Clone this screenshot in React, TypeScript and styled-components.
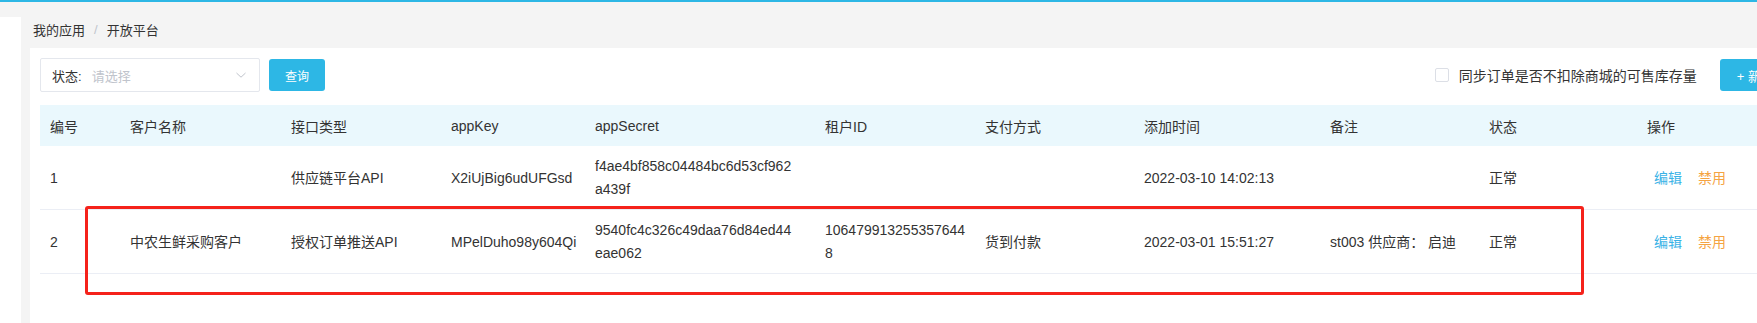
import { FC } from 'react';
import styled, { createGlobalStyle } from 'styled-components';

const GlobalStyle = createGlobalStyle`
	* {
		box-sizing: border-box;
	}
	html, body {
		margin: 0;
		padding: 0;
		overflow: hidden;
	}
	body {
		font-family: 'Liberation Sans', 'Noto Sans CJK SC', sans-serif;
		color: #333;
		background: #f4f4f4;
	}
`;

const colors = {
	primary: '#2db7e5',
	text: '#333333',
	placeholder: '#c0c4cc',
	border: '#e4e7ed',
	line: '#ebeef5',
	headerBg: '#eaf8fd',
	edit: '#3ab2e6',
	disable: '#f5a443',
	annotate: '#f5221b',
};

interface IColumn {
	key: string;
	title: string;
	width?: number;
	wrap?: number;
}

interface IRow {
	id: string;
	name: string;
	type: string;
	appKey: string;
	secret: string;
	tenant: string;
	pay: string;
	time: string;
	remark: string;
	status: string;
}

const columns: IColumn[] = [
	{ key: 'id', title: '编号', width: 80 },
	{ key: 'name', title: '客户名称', width: 161 },
	{ key: 'type', title: '接口类型', width: 160 },
	{ key: 'appKey', title: 'appKey', width: 144 },
	{ key: 'secret', title: 'appSecret', width: 230, wrap: 200 },
	{ key: 'tenant', title: '租户ID', width: 160, wrap: 144 },
	{ key: 'pay', title: '支付方式', width: 159 },
	{ key: 'time', title: '添加时间', width: 186 },
	{ key: 'remark', title: '备注', width: 159 },
	{ key: 'status', title: '状态', width: 158 },
	{ key: 'op', title: '操作' },
];

const rows: IRow[] = [
	{
		id: '1',
		name: '',
		type: '供应链平台API',
		appKey: 'X2iUjBig6udUFGsd',
		secret: 'f4ae4bf858c04484bc6d53cf962a439f',
		tenant: '',
		pay: '',
		time: '2022-03-10 14:02:13',
		remark: '',
		status: '正常',
	},
	{
		id: '2',
		name: '中农生鲜采购客户',
		type: '授权订单推送API',
		appKey: 'MPelDuho98y604Qi',
		secret: '9540fc4c326c49daa76d84ed44eae062',
		tenant: '1064799132553576448',
		pay: '货到付款',
		time: '2022-03-01 15:51:27',
		remark: 'st003 供应商： 启迪',
		status: '正常',
	},
];

const Page = styled.div`
	position: relative;
	display: flex;
	flex-direction: column;
	width: 100vw;
	height: 100vh;
	overflow: hidden;
	border-top: 2px solid ${colors.primary};
`;

const Body = styled.div`
	display: flex;
	flex: 1;
	min-height: 0;
`;

const Sidebar = styled.aside`
	flex: 0 0 21px;
	margin-top: 15px;
	background: #fff;
`;

const Main = styled.main`
	display: flex;
	flex-direction: column;
	flex: 1;
	min-width: 0;
	padding-left: 9px;
`;

const Breadcrumb = styled.nav`
	display: flex;
	align-items: center;
	height: 46px;
	padding: 8px 0 0 3px;
	font-size: 13px;
	color: ${colors.text};
`;

const Separator = styled.span`
	margin: 0 9px;
	color: ${colors.placeholder};
`;

const Panel = styled.section`
	flex: 1;
	width: 1771px;
	padding: 0 10px;
	background: #fff;
`;

const FilterRow = styled.div`
	display: flex;
	align-items: center;
	justify-content: space-between;
	height: 57px;
	padding-bottom: 3px;
`;

const Group = styled.div`
	display: flex;
	align-items: center;
`;

const Select = styled.div`
	display: flex;
	align-items: center;
	width: 220px;
	height: 34px;
	padding: 0 12px 0 11px;
	border: 1px solid ${colors.border};
	border-radius: 2px;
	font-size: 13px;
`;

const SelectLabel = styled.span`
	margin-right: 10px;
	color: ${colors.text};
`;

const Placeholder = styled.span`
	flex: 1;
	color: ${colors.placeholder};
`;

const Button = styled.button<{ $wide?: boolean }>`
	height: 32px;
	padding: ${({ $wide }) => ($wide ? '0 17px' : '0 16px')};
	margin-left: ${({ $wide }) => ($wide ? '23px' : '9px')};
	border: none;
	border-radius: 3px;
	background: ${colors.primary};
	color: #fff;
	font-family: inherit;
	font-size: ${({ $wide }) => ($wide ? '13px' : '12px')};
	white-space: nowrap;
`;

const Checkbox = styled.span`
	display: inline-block;
	width: 14px;
	height: 14px;
	margin-right: 10px;
	border: 1px solid #dcdfe6;
	border-radius: 2px;
	background: #fff;
`;

const CheckLabel = styled.span`
	font-size: 14px;
	color: ${colors.text};
`;

const Table = styled.table`
	width: 100%;
	border-collapse: collapse;
	table-layout: fixed;
	font-size: 14px;
	color: ${colors.text};
`;

const HeadCell = styled.th`
	height: 41px;
	padding: 0 0 0 10px;
	background: ${colors.headerBg};
	font-weight: normal;
	text-align: left;
`;

const Cell = styled.td`
	padding: 9px 0 8px 10px;
	line-height: 23px;
	border-bottom: 1px solid ${colors.line};
	vertical-align: middle;
	text-align: left;
`;

const Wrap = styled.div<{ $max?: number }>`
	max-width: ${({ $max }) => ($max ? `${$max}px` : 'none')};
	word-break: break-all;
`;

const Action = styled.a<{ $danger?: boolean }>`
	margin-left: ${({ $danger }) => ($danger ? '16px' : '7px')};
	color: ${({ $danger }) => ($danger ? colors.disable : colors.edit)};
	cursor: pointer;
`;

const Annotation = styled.div`
	position: absolute;
	left: 85px;
	top: 204px;
	width: 1499px;
	height: 89px;
	border: 3px solid ${colors.annotate};
	border-radius: 3px;
	pointer-events: none;
`;

const Chevron: FC = () => (
	<svg width="12" height="12" viewBox="0 0 12 12">
		<path d="M1.5 4 L6 8.2 L10.5 4" fill="none" stroke="#c0c4cc" strokeWidth="1" />
	</svg>
);

const App: FC = () => {
	const header = columns.map(({ key, title }) => (
		<HeadCell key={key}>{title}</HeadCell>
	));

	const body = rows.map((row) => (
		<tr key={row.id}>
			{columns.map(({ key, wrap }) =>
				key === 'op' ? (
					<Cell key={key}>
						<Action>编辑</Action>
						<Action $danger>禁用</Action>
					</Cell>
				) : (
					<Cell key={key}>
						<Wrap $max={wrap}>{row[key as keyof IRow]}</Wrap>
					</Cell>
				)
			)}
		</tr>
	));

	return (
		<>
			<GlobalStyle />
			<Page>
				<Body>
					<Sidebar />
					<Main>
						<Breadcrumb>
							<span>我的应用</span>
							<Separator>/</Separator>
							<span>开放平台</span>
						</Breadcrumb>
						<Panel>
							<FilterRow>
								<Group>
									<Select>
										<SelectLabel>状态:</SelectLabel>
										<Placeholder>请选择</Placeholder>
										<Chevron />
									</Select>
									<Button>查询</Button>
								</Group>
								<Group>
									<Checkbox />
									<CheckLabel>同步订单是否不扣除商城的可售库存量</CheckLabel>
									<Button $wide>+ 新增</Button>
								</Group>
							</FilterRow>
							<Table>
								<colgroup>
									{columns.map(({ key, width }) => (
										<col key={key} style={width ? { width } : undefined} />
									))}
								</colgroup>
								<thead>
									<tr>{header}</tr>
								</thead>
								<tbody>{body}</tbody>
							</Table>
						</Panel>
					</Main>
				</Body>
				<Annotation />
			</Page>
		</>
	);
};

export default App;
